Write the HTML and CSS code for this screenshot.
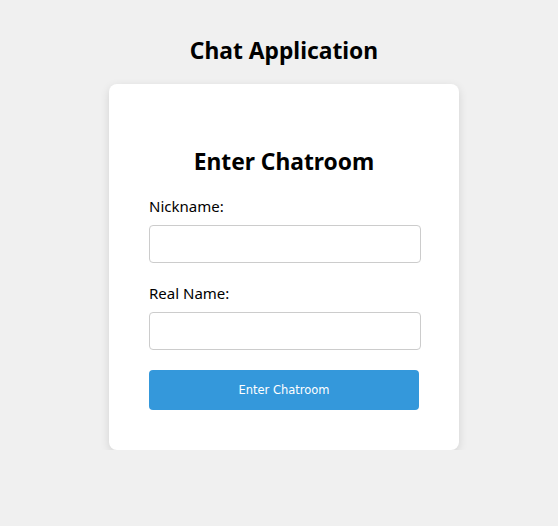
FILE: index.html
```html
<!DOCTYPE html>
<html>
<head>
<meta charset="utf-8">
<link rel="stylesheet" href="styles.css">
</head>
<body>
<div class="page">
  <h1 class="title">Chat Application</h1>
  <div class="card">
    <h2 class="card-title">Enter Chatroom</h2>
    <div class="form-group">
      <label class="label" for="nick">Nickname:</label>
      <input class="input" id="nick" type="text">
    </div>
    <div class="form-group">
      <label class="label" for="real">Real Name:</label>
      <input class="input" id="real" type="text">
    </div>
    <button class="btn" type="button">Enter Chatroom</button>
  </div>
</div>
</body>
</html>
```
FILE: styles.css
```css
html, body {
  margin: 0;
  padding: 0;
  background: #f0f0f0;
}
body {
  font-family: "Noto Sans", "Open Sans", sans-serif;
  color: #000;
}
.page {
  display: flex;
  flex-direction: column;
  align-items: center;
  padding: 35px 0 0 10px;
}
.title {
  margin: 0 0 17px;
  font-size: 22.8px;
  line-height: 32px;
  font-weight: 700;
}
.card {
  width: 350px;
  box-sizing: border-box;
  background: #fff;
  border-radius: 8px;
  padding: 40px;
  box-shadow: 0 3px 10px rgba(0,0,0,0.12);
}
.card-title {
  margin: 22px 0 18px;
  text-align: center;
  font-size: 22.8px;
  line-height: 32px;
  font-weight: 700;
}
.form-group {
  margin-bottom: 20px;
}
.label {
  display: block;
  font-size: 15px;
  line-height: 21px;
  margin-bottom: 8px;
}
.input {
  display: block;
  width: calc(100% + 2px);
  height: 38px;
  box-sizing: border-box;
  border: 1px solid #ccc;
  border-radius: 4px;
  padding: 8px 10px;
  font-size: 16px;
  background: #fff;
}
.btn {
  display: block;
  width: 100%;
  height: 40px;
  border: none;
  border-radius: 4px;
  background: #3498db;
  color: #fff;
  font-family: "DejaVu Sans", sans-serif;
  font-size: 11.5px;
  cursor: pointer;
}
```
